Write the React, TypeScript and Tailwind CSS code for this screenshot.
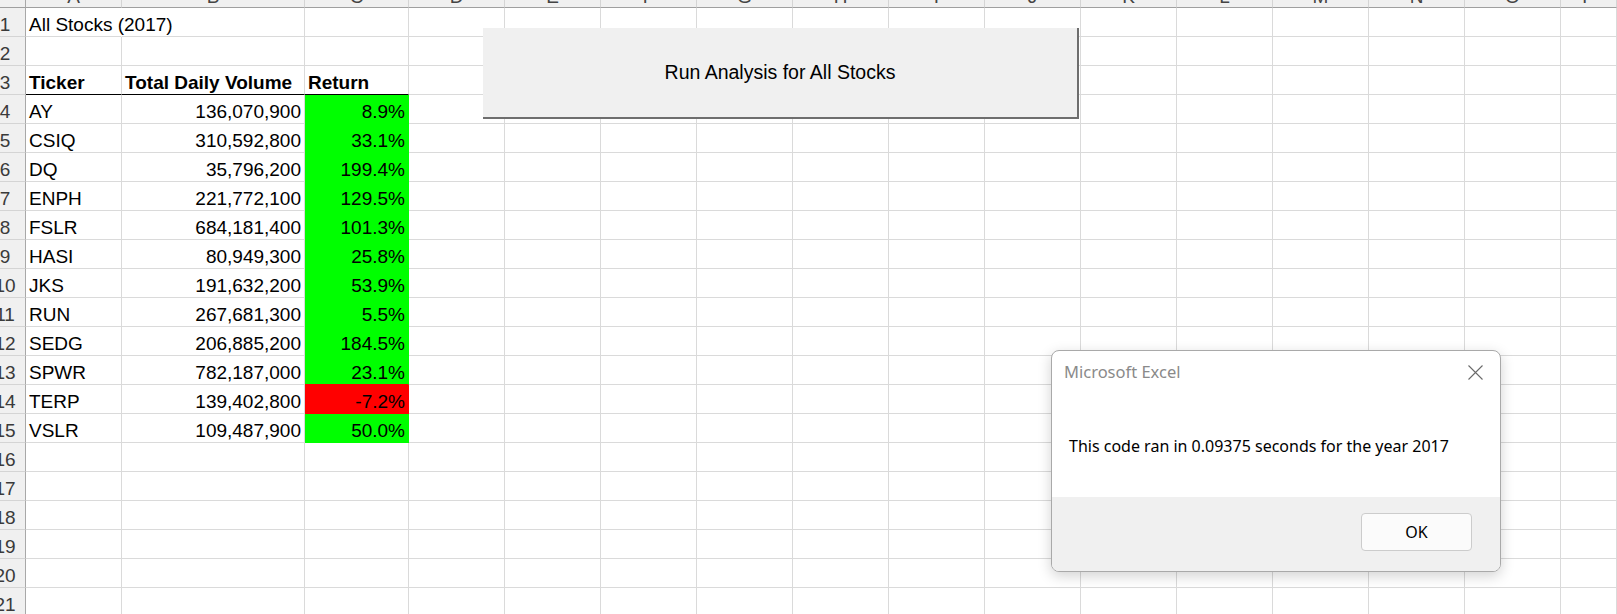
import React from "react";

type CellSpec = {
  text?: string;
  bold?: boolean;
  align?: "left" | "right";
  tone?: "none" | "green" | "red" | "greenRedBottom" | "blackBottom" | "noRight";
};

const colWidths = [
  "w-[96px]",
  "w-[183px]",
  "w-[104px]",
  "w-[96px]",
  "w-[96px]",
  "w-[96px]",
  "w-[96px]",
  "w-[96px]",
  "w-[96px]",
  "w-[96px]",
  "w-[96px]",
  "w-[96px]",
  "w-[96px]",
  "w-[96px]",
  "w-[96px]",
  "flex-1",
];

const letters = ["A", "B", "C", "D", "E", "F", "G", "H", "I", "J", "K", "L", "M", "N", "O", "P"];

const data: [string, string, string][] = [
  ["AY", "136,070,900", "8.9%"],
  ["CSIQ", "310,592,800", "33.1%"],
  ["DQ", "35,796,200", "199.4%"],
  ["ENPH", "221,772,100", "129.5%"],
  ["FSLR", "684,181,400", "101.3%"],
  ["HASI", "80,949,300", "25.8%"],
  ["JKS", "191,632,200", "53.9%"],
  ["RUN", "267,681,300", "5.5%"],
  ["SEDG", "206,885,200", "184.5%"],
  ["SPWR", "782,187,000", "23.1%"],
  ["TERP", "139,402,800", "-7.2%"],
  ["VSLR", "109,487,900", "50.0%"],
];

function toneClass(tone: CellSpec["tone"]) {
  switch (tone) {
    case "green":
      return "bg-[#00ff00] border-r-[#00ff00] border-b-[#00ff00]";
    case "red":
      return "bg-[#ff0000] border-r-[#ff0000] border-b-[#ff0000]";
    case "greenRedBottom":
      return "bg-[#00ff00] border-r-[#00ff00] border-b-[#ff0000]";
    case "blackBottom":
      return "border-r-[#dadada] border-b-[#000000]";
    case "noRight":
      return "border-r-transparent border-b-[#dadada]";
    default:
      return "border-r-[#dadada] border-b-[#dadada]";
  }
}

function buildRows(): CellSpec[][] {
  const rows: CellSpec[][] = [];
  for (let r = 1; r <= 21; r++) {
    const cells: CellSpec[] = letters.map(() => ({}));
    if (r === 1) {
      cells[0] = { text: "All Stocks (2017)", tone: "noRight" };
    } else if (r === 3) {
      cells[0] = { text: "Ticker", bold: true, tone: "blackBottom" };
      cells[1] = { text: "Total Daily Volume", bold: true, tone: "blackBottom" };
      cells[2] = { text: "Return", bold: true, tone: "blackBottom" };
    } else if (r >= 4 && r <= 15) {
      const d = data[r - 4];
      const neg = d[2].startsWith("-");
      const nextNeg = r + 1 <= 15 && data[r - 3][2].startsWith("-");
      cells[0] = { text: d[0] };
      cells[1] = { text: d[1], align: "right" };
      cells[2] = {
        text: d[2],
        align: "right",
        tone: neg ? "red" : nextNeg ? "greenRedBottom" : "green",
      };
    }
    rows.push(cells);
  }
  return rows;
}

export default function App() {
  const rows = buildRows();
  return (
    <div className="relative w-[1617px] h-[614px] overflow-hidden bg-white font-['Liberation_Sans',Arial,sans-serif] text-[19px] text-black">
      {/* column headers */}
      <div className="flex h-[8px]">
        <div className="w-[26px] shrink-0 h-full bg-[#f0f0f0] border-r border-r-[#a8a8a8] border-b border-b-[#9f9f9f]" />
        {letters.map((l, i) => (
          <div
            key={l}
            className={`${colWidths[i]} shrink-0 h-full overflow-hidden bg-[#f0f0f0] border-r border-r-[#d4d4d4] border-b border-b-[#9f9f9f] flex items-end justify-center pb-[1px] leading-none text-[#444444]`}
          >
            <span>{l}</span>
          </div>
        ))}
      </div>

      {/* rows */}
      {rows.map((cells, ri) => (
        <div key={ri} className="flex h-[29px]">
          <div className="w-[26px] shrink-0 h-full overflow-hidden bg-[#f0f0f0] border-r border-r-[#a8a8a8] border-b border-b-[#d4d4d4] flex items-end pb-[2px] leading-none text-[#3a3a3a]">
            <div className="w-[40px] shrink-0 ml-[-15px] text-center">{ri + 1}</div>
          </div>
          {cells.map((c, ci) => (
            <div
              key={ci}
              className={`${colWidths[ci]} shrink-0 h-full border-r border-b ${toneClass(c.tone)} flex items-end pb-[2px] px-[3px] whitespace-nowrap leading-none ${
                c.align === "right" ? "justify-end" : "justify-start"
              } ${c.bold ? "font-bold" : "font-normal"}`}
            >
              {c.text ? <span>{c.text}</span> : null}
            </div>
          ))}
        </div>
      ))}

      {/* form button */}
      <div className="absolute left-[483px] top-[28px] w-[596px] h-[91px] bg-[#f0f0f0] border-r-2 border-b-2 border-[#6e6e6e] flex items-center justify-center text-[19.5px] leading-none">
        Run Analysis for All Stocks
      </div>

      {/* message box */}
      <div className="absolute left-[1051px] top-[350px] w-[450px] rounded-[8px] overflow-hidden border border-[#a9a9a9] bg-white shadow-[0_4px_14px_rgba(0,0,0,0.18)] font-['Noto_Sans','Open_Sans',sans-serif]">
        <div className="h-[146px] flex flex-col">
          <div className="flex items-start justify-between pt-[13px] pl-[12px] pr-[17px]">
            <span className="text-[16.5px] leading-none text-[#8a8a8a]">Microsoft Excel</span>
            <svg width="15" height="15" viewBox="0 0 15 15" className="mt-[1px]">
              <path d="M0.5 0.5 L14.5 14.5 M14.5 0.5 L0.5 14.5" stroke="#6a6a6a" strokeWidth="1.1" fill="none" />
            </svg>
          </div>
          <div className="pt-[57px] pl-[17px] text-[16px] leading-none text-black">
            This code ran in 0.09375 seconds for the year 2017
          </div>
        </div>
        <div className="h-[74px] bg-[#f0f0f0] flex justify-end items-start pt-[16px] pr-[28px]">
          <div className="w-[111px] h-[38px] rounded-[4px] border border-[#cccccc] bg-[#fbfbfb] flex items-center justify-center text-[16px] leading-none text-black">
            OK
          </div>
        </div>
      </div>
    </div>
  );
}
